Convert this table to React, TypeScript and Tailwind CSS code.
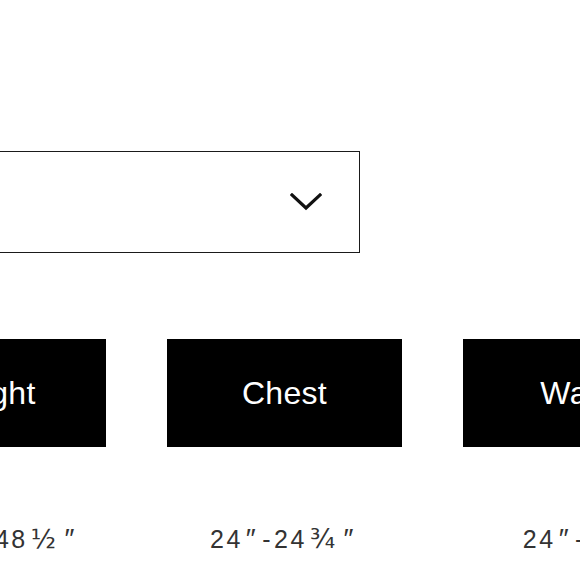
const sizes = [
  { label: "Height", range: "46½″-48½″" },
  { label: "Chest", range: "24″-24¾″" },
  { label: "Waist", range: "24″-25″" },
];

// primes and fractions sit wider in the reference type than in Arial
function Range({ text }: { text: string }) {
  return (
    <>
      {Array.from(text).map((ch, i) => {
        if (ch === "″") return <span key={i} className="mx-[3px] text-[28px]">{ch}</span>;
        if (ch === "½" || ch === "¾")
          return (
            <span key={i} className="mx-[3px] font-['DejaVu_Sans',sans-serif] text-[26px]">
              {ch}
            </span>
          );
        if (ch === "-") return <span key={i} className="mx-[1px]">{ch}</span>;
        return <span key={i}>{ch}</span>;
      })}
    </>
  );
}

function Chevron() {
  return (
    <svg width="32" height="18" viewBox="0 0 32 18" fill="none" aria-hidden>
      <polyline points="2,2 16,15 30,2" stroke="#111" strokeWidth="3.2" strokeLinecap="square" />
    </svg>
  );
}

export default function App() {
  return (
    <div className="h-[580px] w-[580px] overflow-hidden bg-white font-['Liberation_Sans',Arial,sans-serif]">
      <div className="ml-[-129px] w-[900px] pt-[151px]">
        <div className="flex h-[102px] w-[489px] items-center justify-end border-[1.5px] border-[#1a1a1a] pr-[37px]">
          <Chevron />
        </div>
        <div className="mt-[86px] flex gap-[61px]">
          {sizes.map((s) => (
            <div key={s.label} className="flex w-[235px] shrink-0 flex-col items-center">
              <div className="flex h-[108px] w-full items-center justify-center bg-black text-[32px] tracking-[0.3px] text-white">
                {s.label}
              </div>
              <div className="mt-[76px] whitespace-nowrap text-[25px] leading-[32px] tracking-[2.5px] text-[#333]">
                <Range text={s.range} />
              </div>
            </div>
          ))}
        </div>
      </div>
    </div>
  );
}
